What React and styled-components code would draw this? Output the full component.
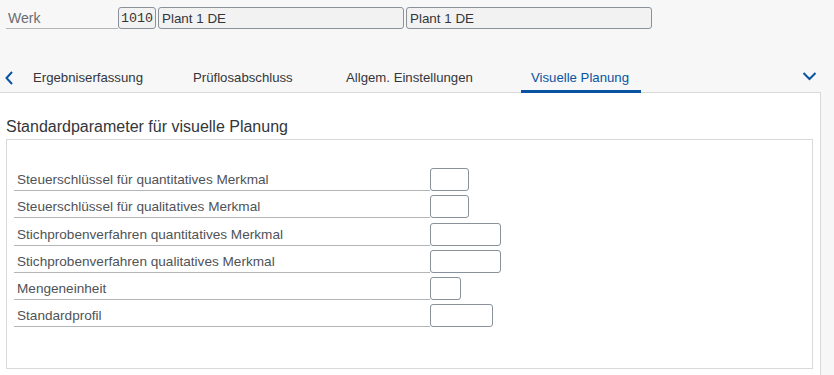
import React from "react";
import styled, { createGlobalStyle } from "styled-components";

const GlobalStyle = createGlobalStyle`
  html, body { margin: 0; padding: 0; }
  body {
    background: #f7f7f7;
    font-family: "Liberation Sans", Arial, sans-serif;
    color: #32363a;
    overflow: hidden;
  }
`;

const Page = styled.div`
  width: 834px;
  height: 375px;
  display: flex;
  flex-direction: column;
  overflow: hidden;
`;

const Header = styled.div`
  display: flex;
  align-items: stretch;
  height: 22px;
  margin: 7px 0 0 6px;
  gap: 2px;
`;

const HeaderLabel = styled.div`
  width: 112px;
  box-sizing: border-box;
  padding-left: 2px;
  display: flex;
  align-items: center;
  font-size: 14px;
  color: #6a6d70;
  border-bottom: 1px solid #b3b6b9;
  margin-right: -2px;
`;

const ReadOnlyField = styled.div`
  width: ${(p) => p.$w}px;
  box-sizing: border-box;
  height: 22px;
  border: 1px solid #89919a;
  border-radius: 3px;
  background: #f2f2f2;
  display: flex;
  align-items: center;
  padding-left: ${(p) => (p.$mono ? 2 : 3)}px;
  font-family: ${(p) =>
    p.$mono ? '"Liberation Mono", "DejaVu Sans Mono", monospace' : '"Liberation Sans", Arial, sans-serif'};
  font-size: ${(p) => (p.$mono ? "13.3px" : "13.4px")};
  color: #32363a;
`;

const TabBar = styled.div`
  margin-top: 31px;
  height: 32px;
  display: flex;
  align-items: center;
`;

const NavButton = styled.div`
  width: ${(p) => p.$w}px;
  height: 32px;
  box-sizing: border-box;
  display: flex;
  align-items: center;
  justify-content: ${(p) => (p.$end ? "center" : "flex-start")};
  padding-left: ${(p) => (p.$end ? "0" : "4px")};
  padding-top: ${(p) => (p.$end ? "0" : "4px")};
  margin-left: ${(p) => (p.$end ? "auto" : "0")};
  margin-right: ${(p) => (p.$end ? "10px" : "0")};
`;

const Tabs = styled.div`
  display: flex;
  height: 32px;
`;

const Tab = styled.div`
  position: relative;
  width: ${(p) => p.$w}px;
  box-sizing: border-box;
  padding: 2px 10px 0;
  display: flex;
  align-items: center;
  white-space: nowrap;
  font-size: 13.2px;
  color: ${(p) => (p.$active ? "#0854a0" : "#32363a")};
  &::after {
    content: "";
    display: ${(p) => (p.$active ? "block" : "none")};
    position: absolute;
    left: 0;
    right: 0;
    bottom: -1px;
    height: 3px;
    background: #0854a0;
  }
`;

const Panel = styled.div`
  flex: 1;
  background: #ffffff;
  border-top: 1px solid #d9d9d9;
  border-right: 1px solid #d9d9d9;
  margin-right: 13px;
  padding: 24px 7px 0 6px;
`;

const Title = styled.div`
  font-size: 16px;
  line-height: 20px;
  color: #32363a;
  margin-bottom: 2px;
`;

const Box = styled.div`
  box-sizing: border-box;
  height: 230px;
  border: 1px solid #d9d9d9;
  padding: 28px 0 0 7px;
  display: flex;
  flex-direction: column;
  gap: 4.3px;
`;

const Row = styled.div`
  display: flex;
  align-items: stretch;
  height: 23px;
`;

const RowLabel = styled.div`
  width: 416px;
  box-sizing: border-box;
  padding-left: 3px;
  display: flex;
  align-items: center;
  padding-top: 1px;
  font-size: 13.6px;
  color: #4f5357;
  border-bottom: 1px solid #b3b6b9;
`;

const Input = styled.div`
  width: ${(p) => p.$w}px;
  box-sizing: border-box;
  height: 23px;
  border: 1px solid #89919a;
  border-radius: 3px;
  background: #ffffff;
`;

const ChevronLeft = () => (
  <svg width="10" height="14" viewBox="0 0 10 14">
    <path d="M8 1 L2.5 7 L8 13" fill="none" stroke="#0854a0" strokeWidth="2" />
  </svg>
);

const ChevronDown = () => (
  <svg width="15" height="10" viewBox="0 0 15 10">
    <path d="M1.5 2 L7.5 8 L13.5 2" fill="none" stroke="#0854a0" strokeWidth="2" />
  </svg>
);

const rows = [
  { label: "Steuerschlüssel für quantitatives Merkmal", w: 39 },
  { label: "Steuerschlüssel für qualitatives Merkmal", w: 39 },
  { label: "Stichprobenverfahren quantitatives Merkmal", w: 71 },
  { label: "Stichprobenverfahren qualitatives Merkmal", w: 71 },
  { label: "Mengeneinheit", w: 31 },
  { label: "Standardprofil", w: 63 },
];

const tabs = [
  { label: "Ergebniserfassung", w: 160 },
  { label: "Prüflosabschluss", w: 153 },
  { label: "Allgem. Einstellungen", w: 185 },
  { label: "Visuelle Planung", w: 120, active: true },
];

export default function App() {
  return (
    <Page>
      <GlobalStyle />
      <Header>
        <HeaderLabel>Werk</HeaderLabel>
        <ReadOnlyField $w={38} $mono>1010</ReadOnlyField>
        <ReadOnlyField $w={246}>Plant 1 DE</ReadOnlyField>
        <ReadOnlyField $w={246}>Plant 1 DE</ReadOnlyField>
      </Header>
      <TabBar>
        <NavButton $w={23}>
          <ChevronLeft />
        </NavButton>
        <Tabs>
          {tabs.map((t) => (
            <Tab key={t.label} $w={t.w} $active={t.active}>{t.label}</Tab>
          ))}
        </Tabs>
        <NavButton $w={30} $end>
          <ChevronDown />
        </NavButton>
      </TabBar>
      <Panel>
        <Title>Standardparameter für visuelle Planung</Title>
        <Box>
          {rows.map((r) => (
            <Row key={r.label}>
              <RowLabel>{r.label}</RowLabel>
              <Input $w={r.w} />
            </Row>
          ))}
        </Box>
      </Panel>
    </Page>
  );
}
